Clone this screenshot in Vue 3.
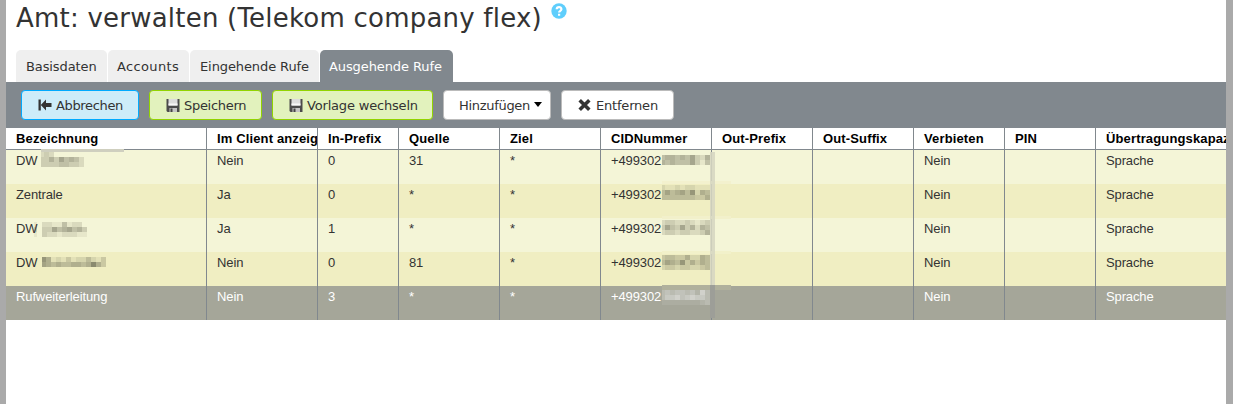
<template>
  <div class="page">
    <div class="head">
      <h1>Amt: verwalten (Telekom company flex)</h1>
      <svg class="help" width="16" height="16" viewBox="0 0 16 16">
        <circle cx="8" cy="8" r="7.7" />
        <path d="M5.7 6.2C5.8 3.6 10.4 3.5 10.4 6.2C10.4 7.9 8.1 7.7 8.1 9.6M8.1 10.7V12.7" />
      </svg>
    </div>

    <ul class="tabs">
      <li v-for="tab in tabs" :key="tab.label" :class="['tab', tab.size, { active: tab.active }]">
        <span>{{ tab.label }}</span>
      </li>
    </ul>

    <div class="toolbar">
      <button class="button blue cancel">
        <svg width="14" height="12" viewBox="0 0 14 12">
          <path d="M0.5 0.5H2.8V11.5H0.5ZM2.8 6L8 0.5V4H13.5V8H8V11.5Z" fill="#333" />
        </svg>
        <span>Abbrechen</span>
      </button>
      <button v-for="b in saveButtons" :key="b.label" :class="['button', 'green', b.size]">
        <svg width="14" height="13" viewBox="0 0 14 13">
          <path d="M0.5 0H13.5V13H1.5L0.5 12Z" fill="#4b4b4b" />
          <path d="M2.5 0H11.5V6.5H2.5Z" fill="#dcdcdc" />
          <path d="M2.5 4.5H11.5V6.5H2.5Z" fill="#f8f8f8" />
          <path d="M3.5 9H11V13H3.5Z" fill="#c4c4c4" />
          <path d="M4.5 9.5H6.5V13H4.5Z" fill="#444" />
        </svg>
        <span>{{ b.label }}</span>
      </button>
      <button class="button add">
        <span>Hinzufügen</span>
        <svg class="caret" width="8" height="5" viewBox="0 0 8 5">
          <path d="M0 0H8L4 5Z" fill="#000" />
        </svg>
      </button>
      <button class="button remove">
        <svg width="13" height="12" viewBox="0 0 13 12">
          <path d="M1.7 1.3L11.3 10.7M11.3 1.3L1.7 10.7" stroke="#333" stroke-width="3.6" />
        </svg>
        <span>Entfernen</span>
      </button>
    </div>

    <div class="grid">
      <table>
        <colgroup>
          <col v-for="c in columns" :key="c.label" :style="{ width: c.width + 'px' }" />
        </colgroup>
        <thead>
          <tr>
            <th v-for="c in columns" :key="c.label">{{ c.label }}</th>
          </tr>
        </thead>
        <tbody>
          <tr v-for="(row, i) in rows" :key="i" :class="{ selected: i === 4 }">
            <td v-for="(cell, j) in row" :key="j">{{ cell }}</td>
          </tr>
        </tbody>
      </table>

      <!-- pixelated cover over names and phone numbers -->
      <svg class="masks" width="1220" height="192" shape-rendering="crispEdges">
        <rect v-for="(b, i) in bands" :key="'b' + i" :x="b[0]" :y="b[1]" :width="b[2]" :height="b[3]" :fill="b[4]" />
        <rect v-for="(p, i) in pixels" :key="i" :x="p.x" :y="p.y" :width="p.w" height="5" :fill="p.fill" />
      </svg>
    </div>
  </div>
</template>

<script setup>
const tabs = [
  { label: "Basisdaten", size: "t1" },
  { label: "Accounts", size: "t2" },
  { label: "Eingehende Rufe", size: "t3" },
  { label: "Ausgehende Rufe", size: "t4", active: true },
];

const saveButtons = [
  { label: "Speichern", size: "save" },
  { label: "Vorlage wechseln", size: "template" },
];

const columns = [
  { label: "Bezeichnung", width: 201 },
  { label: "Im Client anzeigen", width: 111 },
  { label: "In-Prefix", width: 81 },
  { label: "Quelle", width: 101 },
  { label: "Ziel", width: 101 },
  { label: "CIDNummer", width: 111 },
  { label: "Out-Prefix", width: 101 },
  { label: "Out-Suffix", width: 101 },
  { label: "Verbieten", width: 91 },
  { label: "PIN", width: 91 },
  { label: "Übertragungskapazität", width: 151 },
];

const rows = [
  ["DW", "Nein", "0", "31", "*", "+499302", "", "", "Nein", "", "Sprache"],
  ["Zentrale", "Ja", "0", "*", "*", "+499302", "", "", "Nein", "", "Sprache"],
  ["DW", "Ja", "1", "*", "*", "+499302", "", "", "Nein", "", "Sprache"],
  ["DW", "Nein", "0", "81", "*", "+499302", "", "", "Nein", "", "Sprache"],
  ["Rufweiterleitung", "Nein", "3", "*", "*", "+499302", "", "", "Nein", "", "Sprache"],
];

// x, y, width, height, fill
const bands = [
  [35, 21, 83, 3, "#cfcfbf"],
  [656, 53, 69, 3, "#f3f1ce"],
  [656, 88, 69, 3, "#f2f0cb"],
  [656, 123, 69, 3, "#f2f1ca"],
  [656, 157, 69, 5, "#b0b09c"],
  [704, 24, 5, 133, "rgba(214, 214, 194, 0.88)"],
  [704, 157, 5, 33, "#9d9e98"],
];

// one digit per block, 0 is clear and 9 is darkest
const masks = [
  { x: 35, y: 24, first: 3, lines: ["232000000", "335364542", "333344332"] },
  { x: 28, y: 94, first: 3, lines: ["10221141220", "30336456453", "10322122211"] },
  { x: 36, y: 129, first: 4, lines: ["7512131224213", "6545445545853"] },
  { x: 656, y: 27, first: 3, lines: ["4554546325", "5454446314"] },
  { x: 656, y: 57, first: 3, lines: ["2112122111", "4645647254", "4444444335"] },
  { x: 656, y: 92, first: 3, lines: ["2332232123", "3643635254", "2332332235"] },
  { x: 656, y: 127, first: 3, lines: ["3443352254", "4654735354", "2332332234"] },
  { x: 656, y: 162, first: 3, light: true, lines: ["3434434263", "3556456553", "1111111123"] },
];

const pixels = masks.flatMap((m) =>
  m.lines.flatMap((line, r) =>
    [...line].map((d, c) => ({
      x: c ? m.x + m.first + (c - 1) * 5 : m.x,
      y: m.y + r * 5,
      w: c ? 5 : m.first,
      fill: m.light ? `rgba(245, 245, 245, ${d * 0.09})` : `rgba(90, 90, 72, ${d * 0.085})`,
    }))
  )
);
</script>

<style>
body {
  margin: 0;
  background: #fff;
}
</style>

<style scoped>
* {
  box-sizing: border-box;
}

.page {
  width: 1233px;
  height: 404px;
  border-left: 6px solid #aaa;
  border-right: 7px solid #aaa;
  background: #fff;
  color: #333;
  font-family: "DejaVu Sans", Verdana, sans-serif;
  font-size: 13px;
  overflow: hidden;
}

.head {
  display: flex;
  height: 50px;
  padding-left: 10px;
}

h1 {
  margin: 0;
  width: 535px;
  font-size: 26px;
  font-weight: normal;
  line-height: 36px;
  letter-spacing: 0.22px;
  white-space: nowrap;
}

.help {
  margin-top: 3px;
}

.help circle {
  fill: #5fcefc;
}

.help path {
  fill: none;
  stroke: #fff;
  stroke-width: 2.2;
}

.tabs {
  display: flex;
  gap: 1px;
  margin: 0;
  padding: 0 0 0 10px;
  list-style: none;
}

.tab {
  height: 32px;
  padding-left: 10px;
  line-height: 33px;
  letter-spacing: -0.1px;
  white-space: nowrap;
  background: #efefef;
  border-radius: 5px 5px 0 0;
}

.t1 {
  width: 91px;
}

.t2 {
  width: 81px;
  padding-left: 9px;
  letter-spacing: 0.35px;
}

.t3 {
  width: 129px;
}

.t4 {
  width: 133px;
  padding-left: 9px;
}

.active {
  background: #81888e;
  color: #fff;
}

.toolbar {
  display: flex;
  gap: 10px;
  height: 46px;
  padding: 8px 0 0 15px;
  background: #81888e;
}

.button {
  display: flex;
  align-items: center;
  height: 30px;
  padding: 0 0 0 16px;
  border: 1px solid #bbb;
  border-radius: 4px;
  background: #fff;
  color: #333;
  font: inherit;
  white-space: nowrap;
}

.button svg {
  flex: none;
  margin-right: 4px;
}

.blue {
  border-color: #0af;
  background: #cdecf9;
}

.green {
  border-color: #92d400;
  background: #e2f2bd;
}

.cancel {
  width: 118px;
  letter-spacing: -0.35px;
}

.save {
  width: 113px;
  letter-spacing: -0.3px;
}

.template {
  width: 161px;
  letter-spacing: -0.18px;
}

.add {
  width: 108px;
  padding-left: 15px;
  letter-spacing: -0.3px;
}

.remove {
  width: 113px;
  letter-spacing: -0.2px;
}

.button.remove svg {
  margin-right: 5px;
}

.button .caret {
  margin: 0 0 1px 4px;
}

.grid {
  position: relative;
  overflow: hidden;
  font-family: "Liberation Sans", Arial, sans-serif;
  font-size: 13px;
}

table {
  width: 1241px;
  table-layout: fixed;
  border-collapse: separate;
  border-spacing: 0;
}

th,
td {
  padding: 0 0 0 10px;
  overflow: hidden;
  border-right: 1px solid #81888e;
  text-align: left;
  vertical-align: top;
  white-space: nowrap;
}

th {
  height: 22px;
  border-bottom: 1px solid #81888e;
  color: #000;
  line-height: 21px;
  letter-spacing: 0.14px;
}

td {
  height: 34px;
  line-height: 21px;
  letter-spacing: -0.12px;
}

tbody tr {
  background: #f4f5d7;
}

tbody tr:nth-child(even) {
  background: #f0eec2;
}

tbody tr.selected {
  background: #a5a699;
  color: #fff;
}

.masks {
  position: absolute;
  top: 0;
  left: 0;
}
</style>
